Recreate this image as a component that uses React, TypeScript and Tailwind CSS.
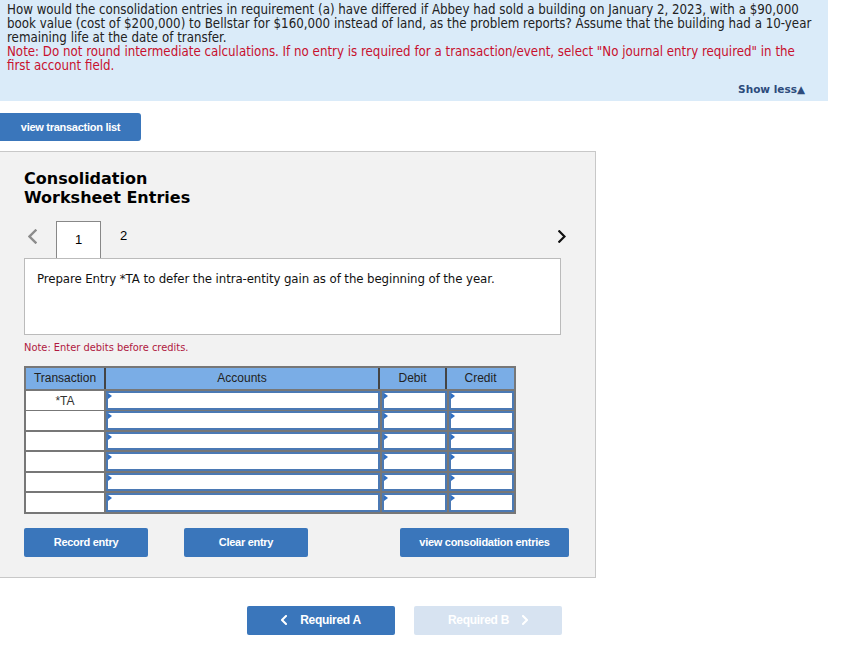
import React from 'react';

const verdana = { fontFamily: '"DejaVu Sans", Verdana, sans-serif' };
const narrow = { fontFamily: '"DejaVu Sans Condensed", "DejaVu Sans", Verdana, sans-serif' };

// Blue action button
const Btn = ({ label, w }: { label: string; w: string }) => (
  <div className={`${w} h-[29px] bg-[#3a76bb] rounded-[2px] flex items-center justify-center text-white text-[11px] font-bold tracking-tight font-['Liberation_Sans',Arial,sans-serif]`}>
    {label}
  </div>
);

// Input cell with the small marker triangle
const InputCell = () => (
  <div className="relative bg-white border-2 border-[#4b79b4] h-full">
    <div className="absolute top-0 left-0 w-0 h-0 border-y-[3px] border-y-transparent border-l-[4px] border-l-[#2f6fc4]" />
  </div>
);

const Chevron = ({ dir, color, size, sw }: { dir: 'l' | 'r'; color: string; size: number; sw: number }) => (
  <svg width={size * 0.6} height={size} viewBox="0 0 6 10" fill="none" stroke={color} strokeWidth={sw} strokeLinecap="square">
    <path d={dir === 'l' ? 'M5 1L1 5L5 9' : 'M1 1L5 5L1 9'} />
  </svg>
);

const rows = ['*TA', '', '', '', '', ''];

export default function App() {
  return (
    <div className="w-[847px] min-h-[670px] bg-white">
      {/* question box */}
      <div className="w-[828px] h-[101px] bg-[#daebf9] px-[7px] pt-[3px] relative" style={narrow}>
        <p className="text-[13.2px] leading-[14px] text-[#222]">
          How would the consolidation entries in requirement (a) have differed if Abbey had sold a building on January 2, 2023, with a $90,000 book value (cost of $200,000) to Bellstar for $160,000 instead of land, as the problem reports? Assume that the building had a 10-year remaining life at the date of transfer.
        </p>
        <p className="text-[13.2px] leading-[14px] text-[#c8102e]">
          Note: Do not round intermediate calculations. If no entry is required for a transaction/event, select "No journal entry required" in the first account field.
        </p>
        <div className="absolute right-[23px] top-[80px] leading-[16px]">
          <span className="text-[10.5px] font-bold text-[#2d4b7c]" style={verdana}>Show less▲</span>
        </div>
      </div>

      <div className="mt-[12px] w-[141px] h-[28px] bg-[#3a76bb] rounded-r-[3px] flex items-center justify-center text-white text-[11px] font-bold tracking-tight font-['Liberation_Sans',Arial,sans-serif]">
        view transaction list
      </div>

      {/* worksheet panel */}
      <div className="mt-[10px] w-[596px] bg-[#f2f2f2] border-t border-r border-b border-[#c8c8c8] pl-[24px] pt-[17px] pb-[20px]">
        <h2 className="text-[16px] leading-[19px] font-bold text-black" style={verdana}>
          Consolidation<br />Worksheet Entries
        </h2>

        <div className="mt-[14px] w-[536px] h-[37px] flex items-end">
          <span className="w-[32px] pl-[4px] pb-[14px]"><Chevron dir="l" color="#8c8c8c" size={15} sw={1.6} /></span>
          <div className="w-[45px] h-[37px] bg-white border border-b-0 border-[#888] flex items-center justify-center text-[13px] text-black font-['Liberation_Sans',Arial,sans-serif]">1</div>
          <span className="ml-[19px] pb-[13px] text-[13px] text-black font-['Liberation_Sans',Arial,sans-serif]">2</span>
          <span className="ml-auto mr-[-6px] pb-[15px]"><Chevron dir="r" color="#111" size={13} sw={1.7} /></span>
        </div>

        <div className="w-[537px] h-[77px] bg-white border border-[#bbb] px-[12px] pt-[12px]">
          <p className="text-[11.8px] text-[#111] tracking-[-0.1px]" style={verdana}>
            Prepare Entry *TA to defer the intra-entity gain as of the beginning of the year.
          </p>
        </div>

        <p className="mt-[6px] text-[9.9px] text-[#b01840]" style={verdana}>Note: Enter debits before credits.</p>

        {/* journal table */}
        <div className="mt-[10px] w-[492px] border-2 border-[#777] font-['Liberation_Sans',Arial,sans-serif]">
          <div className="grid grid-cols-[80px_274px_67px_67px] h-[21px] bg-[#7aade6] text-[12px] text-[#222]">
            <div className="flex items-center justify-center border-r-2 border-[#444]">Transaction</div>
            <div className="flex items-center justify-center border-r-2 border-[#444]">Accounts</div>
            <div className="flex items-center justify-center border-r-2 border-[#444]">Debit</div>
            <div className="flex items-center justify-center">Credit</div>
          </div>
          {rows.map((t, i) => (
            <div key={i} className="grid grid-cols-[80px_274px_67px_67px] h-[20.5px] border-t-2 border-[#777]">
              <div className="bg-white border-r-2 border-[#777] flex items-start justify-center pt-[1px] text-[12px] text-[#333]">{t}</div>
              <InputCell />
              <div className="border-l-2 border-[#777]"><InputCell /></div>
              <div className="border-l-2 border-[#777]"><InputCell /></div>
            </div>
          ))}
        </div>

        <div className="mt-[14px] flex">
          <Btn label="Record entry" w="w-[124px]" />
          <div className="ml-[36px]"><Btn label="Clear entry" w="w-[124px]" /></div>
          <div className="ml-[92px]"><Btn label="view consolidation entries" w="w-[169px]" /></div>
        </div>
      </div>

      {/* requirement nav */}
      <div className="mt-[28px] pl-[247px] flex gap-[19px] font-['Liberation_Sans',Arial,sans-serif]">
        <div className="w-[148px] h-[29px] bg-[#3a76bb] rounded-[2px] flex items-center justify-center gap-[13px] text-white text-[12px] font-bold tracking-tight">
          <Chevron dir="l" color="#fff" size={10} sw={2} />
          <span>Required A</span>
        </div>
        <div className="w-[148px] h-[29px] bg-[#d7e3f1] rounded-[2px] flex items-center justify-center gap-[13px] text-white text-[12px] font-bold tracking-tight">
          <span>Required B</span>
          <Chevron dir="r" color="#fff" size={10} sw={2} />
        </div>
      </div>
    </div>
  );
}
